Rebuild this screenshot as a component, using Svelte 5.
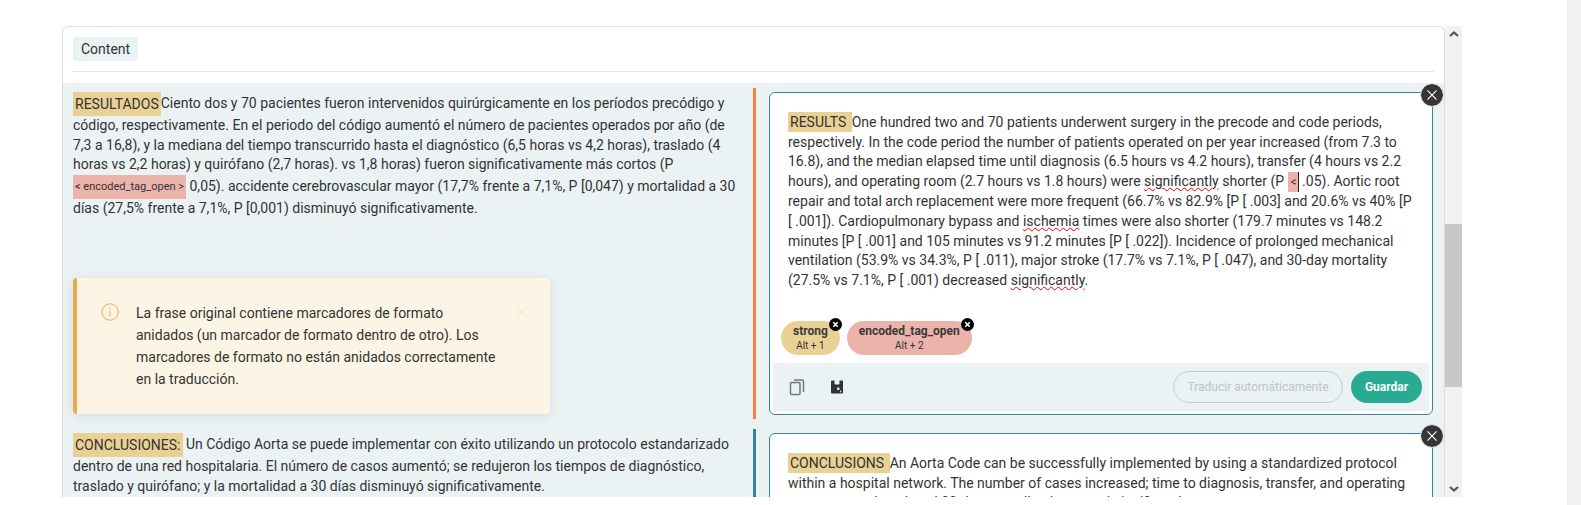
<script>
  const closeIcon = 'M7 7 L17 17 M17 7 L7 17'
</script>

<div class="page">
  <div class="frame">
    <div class="card">
      <div class="card-head">
        <span class="tab">Content</span>
        <div class="rule"></div>
      </div>

      <div class="rows">
        <!-- Results -->
        <div class="row">
          <div class="source">
            <p class="text">
              <span class="tag-block gold">RESULTADOS</span>Ciento dos y 70 pacientes fueron intervenidos quirúrgicamente en los períodos precódigo y código, respectivamente. En el periodo del código aumentó el número de pacientes operados por año (de 7,3 a 16,8), y la mediana del tiempo transcurrido hasta el diagnóstico (6,5 horas vs 4,2 horas), traslado (4 horas vs 2,2 horas) y quirófano (2,7 horas). vs 1,8 horas) fueron significativamente más cortos (P <span class="tag-block rose small">&lt; encoded_tag_open &gt;</span> 0,05). accidente cerebrovascular mayor (17,7% frente a 7,1%, P [0,047) y mortalidad a 30 días (27,5% frente a 7,1%, P [0,001) disminuyó significativamente.
            </p>

            <div class="notice">
              <svg class="notice-icon" viewBox="0 0 18 18" width="18" height="18" fill="none" stroke="#eba94d" stroke-width="1">
                <circle cx="9" cy="9" r="8.2" />
                <path d="M9 4.600v1.200M9 7.600v5.600" />
              </svg>
              <p>La frase original contiene marcadores de formato anidados (un marcador de formato dentro de otro). Los marcadores de formato no están anidados correctamente en la traducción.</p>
              <svg class="notice-close" viewBox="0 0 12 12" width="12" height="12" fill="none" stroke="#f7e6c4" stroke-width="1">
                <path d="M1.500 1.500l9 9M10.500 1.500l-9 9" />
              </svg>
            </div>
          </div>

          <div class="bar orange"></div>

          <div class="target">
            <button class="dismiss" aria-label="Cerrar">
              <svg viewBox="0 0 24 24" width="22" height="22" fill="none" stroke="#fff" stroke-width="1.2"><path d={closeIcon} /></svg>
            </button>
            <div class="editor">
              <p class="text">
                <span class="gold inline">RESULTS&nbsp;</span>One hundred two and 70 patients underwent surgery in the precode and code periods, respectively. In the code period the number of patients operated on per year increased (from 7.3 to 16.8), and the median elapsed time until diagnosis (6.5 hours vs 4.2 hours), transfer (4 hours vs 2.2 hours), and operating room (2.7 hours vs 1.8 hours) were <span class="typo">significantly</span> shorter (P <span class="rose inline caret">&lt;</span> .05). Aortic root repair and total arch replacement were more frequent (66.7% vs 82.9% [P [ .003] and 20.6% vs 40% [P [ .001]). Cardiopulmonary bypass and <span class="typo">ischemia</span> times were also shorter (179.7 minutes vs 148.2 minutes [P [ .001] and 105 minutes vs 91.2 minutes [P [ .022]). Incidence of prolonged mechanical ventilation (53.9% vs 34.3%, P [ .011), major stroke (17.7% vs 7.1%, P [ .047), and 30-day mortality (27.5% vs 7.1%, P [ .001) decreased <span class="typo">significantly</span>.
              </p>
            </div>
            <div class="chips">
              <div class="chip gold">
                <strong>strong</strong><span>Alt + 1</span>
                <i class="chip-x"><svg viewBox="0 0 13 13" width="13" height="13" fill="none" stroke="#fff" stroke-width="1.6"><path d="M4.300 4.300l4.400 4.400M8.700 4.300l-4.400 4.400" /></svg></i>
              </div>
              <div class="chip rose">
                <strong>encoded_tag_open</strong><span>Alt + 2</span>
                <i class="chip-x"><svg viewBox="0 0 13 13" width="13" height="13" fill="none" stroke="#fff" stroke-width="1.6"><path d="M4.300 4.300l4.400 4.400M8.700 4.300l-4.400 4.400" /></svg></i>
              </div>
            </div>
            <div class="toolbar">
              <svg class="tool" viewBox="0 0 16 18" width="16" height="18" fill="none" stroke="#777" stroke-width="1.500">
                <rect x="1.500" y="4.500" width="9.500" height="12" rx="1" />
                <path d="M5 2h8a1.500 1.500 0 0 1 1.500 1.500V14" />
              </svg>
              <svg class="tool save" viewBox="0 0 12 14" width="12" height="14">
                <path fill="#333" d="M1 0.500H3.500V3.500A1 1 0 0 0 4.500 4.500H7.500A1 1 0 0 0 8.500 3.500V0.500H11A1 1 0 0 1 12 1.500V12.500A1 1 0 0 1 11 13.500H1A1 1 0 0 1 0 12.500V1.500A1 1 0 0 1 1 0.500z" />
                <rect x="6" y="7.500" width="2.500" height="2.500" fill="#dfe6e8" />
                <rect x="9" y="10.500" width="1.200" height="1.800" fill="#dfe6e8" />
              </svg>
              <div class="spacer"></div>
              <button class="btn ghost">Traducir automáticamente</button>
              <button class="btn primary">Guardar</button>
            </div>
          </div>
        </div>

        <!-- Conclusions -->
        <div class="row">
          <div class="source">
            <p class="text">
              <span class="tag-block gold">CONCLUSIONES:</span> Un Código Aorta se puede implementar con éxito utilizando un protocolo estandarizado dentro de una red hospitalaria. El número de casos aumentó; se redujeron los tiempos de diagnóstico, traslado y quirófano; y la mortalidad a 30 días disminuyó significativamente.
            </p>
          </div>

          <div class="bar blue"></div>

          <div class="target">
            <button class="dismiss" aria-label="Cerrar">
              <svg viewBox="0 0 24 24" width="22" height="22" fill="none" stroke="#fff" stroke-width="1.2"><path d={closeIcon} /></svg>
            </button>
            <div class="editor">
              <p class="text">
                <span class="gold inline">CONCLUSIONS&nbsp;</span>An Aorta Code can be successfully implemented by using a standardized protocol within a hospital network. The number of cases increased; time to diagnosis, transfer, and operating room were reduced; and 30-day mortality decreased significantly.
              </p>
            </div>
          </div>
        </div>
      </div>
    </div>

    <div class="scrollbar">
      <svg class="arrow" viewBox="0 0 10 6" width="10" height="6" fill="none" stroke="#555" stroke-width="2.200"><path d="M1 5l4-3.500 4 3.500" /></svg>
      <div class="track"><div class="thumb"></div></div>
      <svg class="arrow" viewBox="0 0 10 6" width="10" height="6" fill="none" stroke="#555" stroke-width="2.200"><path d="M1 1l4 3.500 4-3.500" /></svg>
    </div>
  </div>
  <div class="page-scroll"></div>
</div>

<style>
  :global(body) {
    margin: 0;
    background: #fff;
    font-family: Roboto, "Liberation Sans", sans-serif;
    color: #333;
  }
  .page {
    height: 505px;
    overflow: hidden;
    display: flex;
    justify-content: space-between;
  }
  .frame {
    display: flex;
    height: 471px;
    margin: 26px 0 0 62px;
    overflow: hidden;
  }
  .page-scroll {
    width: 14px;
    background: #f1f1f1;
  }

  .card {
    width: 1381px;
    border: 1px solid #ddd;
    border-bottom: 0;
    border-radius: 6px 6px 0 0;
    background: #fff;
    overflow: hidden;
  }
  .card-head { padding: 10px 10px 0; height: 46px; box-sizing: border-box; }
  .tab {
    display: inline-block;
    height: 24px;
    line-height: 24px;
    padding: 0 8px;
    background: #ebf2f4;
    border-radius: 3px;
    font-size: 14px;
  }
  .rule { height: 1px; background: #e6e6e6; margin-top: 10px; }

  .rows {
    margin-top: 10px;
    padding-top: 5px;
    background: #ebf2f4;
  }
  .row {
    display: flex;
    margin-bottom: 10px;
  }
  .source {
    width: 690px;
    box-sizing: border-box;
    padding: 4px 10px;
    flex-shrink: 0;
  }
  .bar { width: 3px; flex-shrink: 0; }
  .bar.orange { background: #f5813f; }
  .bar.blue { background: #35849b; }

  .text {
    margin: 0;
    font-size: 14px;
    line-height: 19.6px;
    color: #333;
  }
  .gold { background: #e9d195; }
  .rose { background: #ecb3ab; }
  .tag-block {
    display: inline-block;
    height: 24px;
    line-height: 24px;
    padding: 0 2px;
    vertical-align: middle;
  }
  .small { font-size: 11px; }
  .inline { padding: 2px; }
  .caret { border-right: 1px solid #222; font-size: 12px; padding: 3px 1px 3px 3px; }
  .typo { text-decoration: underline wavy #e00; text-decoration-thickness: 1px; text-underline-offset: 1px; }

  .notice {
    position: relative;
    box-sizing: border-box;
    width: 477px;
    height: 136px;
    margin-top: 60px;
    padding: 24px 0 0 59px;
    background: #fcf5e5;
    border-left: 4px solid #eba94d;
    border-radius: 4px;
    box-shadow: 0 2px 12px rgba(60, 90, 100, 0.14);
  }
  .notice p { margin: 0; width: 360px; font-size: 14px; line-height: 22px; }
  .notice-icon { position: absolute; left: 24px; top: 25px; }
  .notice-close { position: absolute; right: 23px; top: 28px; }

  .target {
    position: relative;
    flex: 1;
    margin: 4px 11px 4px 13px;
    border: 1px solid #35849b;
    border-radius: 6px;
    background: #fff;
    min-width: 0;
  }
  .dismiss {
    position: absolute;
    top: -9px;
    right: -11px;
    width: 22px;
    height: 22px;
    padding: 0;
    border: 0;
    border-radius: 50%;
    background: #363636;
    outline: 1px solid #ddd;
    z-index: 2;
  }
  .dismiss svg { display: block; }
  .editor { padding: 20px 18px 0 18px; height: 208px; }

  .chips { display: flex; gap: 7px; padding: 0 11px; }
  .chip {
    position: relative;
    height: 34px;
    border-radius: 17px;
    padding: 0 12px;
    display: flex;
    flex-direction: column;
    align-items: center;
    justify-content: center;
  }
  .chip strong { font-size: 12px; font-weight: 700; line-height: 16px; color: #3a3a3a; }
  .chip span { font-size: 10px; line-height: 14px; }
  .chip-x {
    position: absolute;
    top: -3px;
    right: -2px;
    width: 13px;
    height: 13px;
    border-radius: 50%;
    background: #000;
  }
  .chip-x svg { display: block; }

  .toolbar {
    display: flex;
    align-items: center;
    gap: 8px;
    height: 48px;
    margin: 8px 3px 3px;
    padding: 0 7px 0 16px;
    background: #ebf2f4;
    border-radius: 3px;
  }
  .tool.save { margin-left: 18px; }
  .spacer { flex: 1; }
  .btn {
    height: 32px;
    border-radius: 16px;
    font-family: inherit;
    font-size: 12px;
    padding: 0;
  }
  .ghost {
    width: 170px;
    border: 1px solid #c6cdcf;
    background: transparent;
    color: #c0c4c6;
  }
  .primary {
    width: 71px;
    border: 0;
    background: #29ab93;
    color: #fff;
    font-weight: 700;
  }

  .scrollbar {
    width: 17px;
    background: #f1f1f1;
    display: flex;
    flex-direction: column;
    align-items: center;
  }
  .arrow { margin: 5px 0; flex-shrink: 0; }
  .track { flex: 1; width: 100%; padding-top: 182px; box-sizing: border-box; }
  .thumb { height: 163px; background: #c8c8c8; }
</style>
